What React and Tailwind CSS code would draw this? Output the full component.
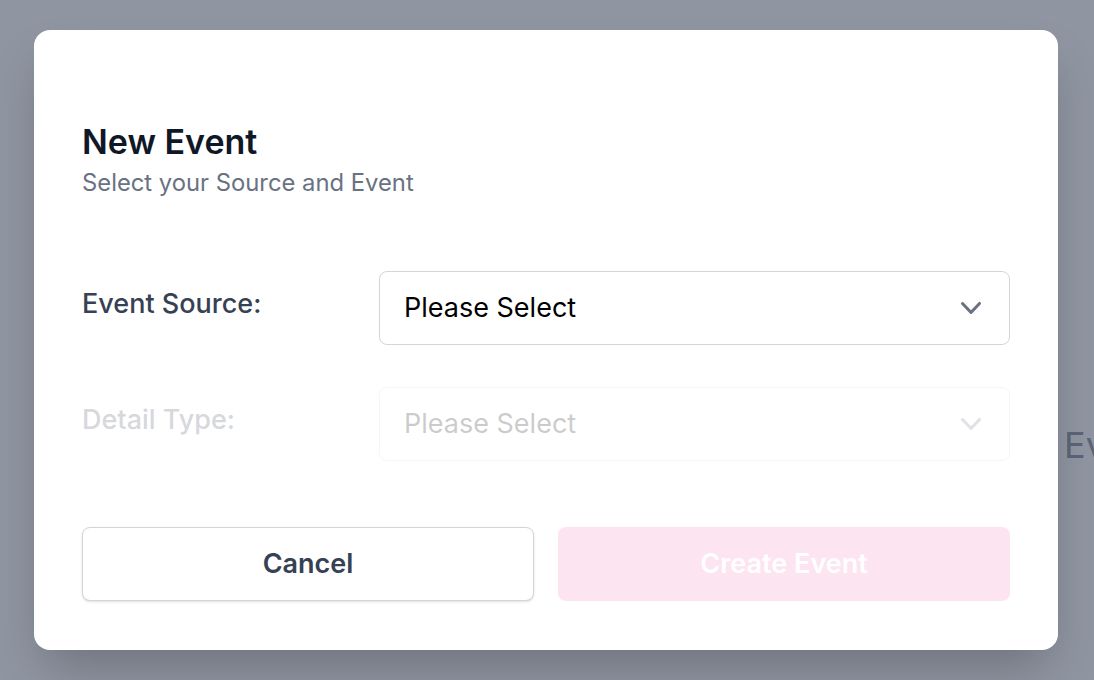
import React from "react";

function Chevron({ className }) {
  return (
    <svg viewBox="0 0 20 20" fill="currentColor" className={className}>
      <path
        fillRule="evenodd"
        d="M5.23 7.21a.75.75 0 011.06.02L10 11.168l3.71-3.938a.75.75 0 111.08 1.04l-4.25 4.5a.75.75 0 01-1.08 0l-4.25-4.5a.75.75 0 01.02-1.06z"
        clipRule="evenodd"
      />
    </svg>
  );
}

function SelectRow({ label, disabled }) {
  return (
    <div className={`flex items-start ${disabled ? "opacity-20" : ""}`}>
      <label className="w-[297px] shrink-0 pt-[17px] text-[27px] leading-8 font-medium text-gray-700">
        {label}
      </label>
      <div className="flex h-[74px] flex-1 items-center justify-between rounded-lg border border-gray-300 bg-white pl-6 pr-[18px]">
        <span className="text-[27px] text-black">Please Select</span>
        <Chevron className="h-10 w-10 text-gray-500" />
      </div>
    </div>
  );
}

export default function App() {
  return (
    <div
      className="relative h-[680px] w-full overflow-hidden bg-white"
      style={{ fontFamily: "Inter, 'Noto Sans', sans-serif" }}
    >
      {/* page behind */}
      <div className="whitespace-nowrap pl-[1064px] pt-[418px] text-[36px] text-gray-700">
        Events
      </div>

      {/* overlay */}
      <div className="absolute inset-0 bg-gray-500/75" />

      {/* modal */}
      <div className="absolute left-[34px] top-[30px] h-[620px] w-[1024px] rounded-2xl bg-white px-12 pt-[90px] shadow-2xl">
        <h2 className="text-[34px] leading-[44px] font-semibold text-gray-900">
          New Event
        </h2>
        <p className="mt-[5px] text-[23.8px] leading-7 text-gray-500">
          Select your Source and Event
        </p>

        <div className="mt-[74px] flex flex-col gap-[42px]">
          <SelectRow label="Event Source:" />
          <SelectRow label="Detail Type:" disabled />
        </div>

        <div className="mt-[66px] grid grid-cols-2 gap-6">
          <button className="h-[74px] rounded-lg border border-gray-300 bg-white text-[27px] font-semibold text-gray-700 shadow-sm">
            Cancel
          </button>
          <button
            disabled
            className="h-[74px] rounded-lg bg-pink-600 text-[27px] font-semibold text-white opacity-10"
          >
            Create Event
          </button>
        </div>
      </div>
    </div>
  );
}
